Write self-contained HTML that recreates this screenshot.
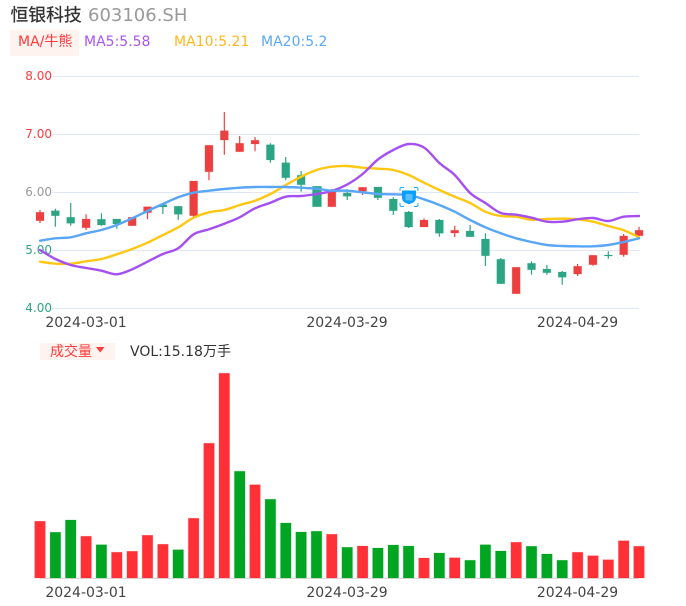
<!DOCTYPE html>
<html lang="zh">
<head>
<meta charset="utf-8">
<title>恒银科技</title>
<style>
html,body{margin:0;padding:0;background:#fff;width:686px;height:606px;overflow:hidden}
svg{display:block;position:absolute;left:0;top:0}
text{font-family:"DejaVu Sans","Noto Sans CJK SC",sans-serif}
</style>
</head>
<body>
<svg width="686" height="606" viewBox="0 0 686 606" xmlns="http://www.w3.org/2000/svg">
<rect width="686" height="606" fill="#fff"/>
<text x="10.5" y="21" font-size="17.800" fill="#333" stroke="#333" stroke-width="0.3">恒银科技</text>
<text x="88" y="21" font-size="18" fill="#999">603106.SH</text>
<rect x="10" y="30" width="69" height="26" fill="#fff3ef"/>
<text x="18" y="46" font-size="14" fill="#ff3b3b">MA/牛熊</text>
<text x="84" y="46" font-size="14" fill="#a855f7">MA5:5.58</text>
<text x="174" y="46" font-size="14" fill="#ffb71c">MA10:5.21</text>
<text x="261" y="46" font-size="14" fill="#5aa9fa">MA20:5.2</text>

<path d="M52 76.5H639M52 134.5H639M52 192.5H639M52 250.5H639M52 308.5H639" stroke="#e0e6f5" stroke-width="1" fill="none"/>
<g font-size="12" text-anchor="end">
<text x="52" y="80" fill="#ff3b3b">8.00</text>
<text x="52" y="138" fill="#ff3b3b">7.00</text>
<text x="52" y="196" fill="#999">6.00</text>
<text x="52" y="254" fill="#2ca584">5.00</text>
<text x="52" y="312" fill="#2ca584">4.00</text>
</g>

<path fill="none" stroke="#ec4040" stroke-width="1.2" d="M40 210V223M86.08 214.3V230M132.16 217.3V225.7M147.52 206.7V219.3M193.6 181V218.3M208.96 145.3V180.3M224.32 112V154.7M239.68 136V151.7M255.04 137V151.3M331.84 189V206.7M362.56 187.3V195M424 218.5V227M454.72 225.7V237M516.16 267.3V293.7M577.6 264V276M592.96 255.3V265.7M623.68 234V256.7M639.04 226.7V235.7"/>
<path fill="none" stroke="#2ca584" stroke-width="1.2" d="M55.36 208.7V226.7M70.72 203V225.7M101.44 213.3V225.7M116.8 219V228.7M162.88 203.3V214M178.24 206V220M270.4 143.3V162.7M285.76 157V180.3M301.12 171V191.7M316.48 186.3V206.7M347.2 189.3V200M377.92 187V200M393.28 197.3V215M408.64 211V228M439.36 219V236.7M470.08 225V236.7M485.44 233.3V266M500.8 258V283.7M531.52 261.3V274.7M546.88 265V274.7M562.24 271V284.7M608.32 251.3V258.7"/>
<path fill="#ec4040" stroke="#ec4040" stroke-opacity="0.25" stroke-width="0.8" d="M36 212.3h8v8.4h-8zM82.08 219h8v8.7h-8zM128.16 217.3h8v8.4h-8zM143.52 206.7h8v6h-8zM189.6 181h8v34.7h-8zM204.96 145.3h8v26.4h-8zM220.32 130.7h8v9.3h-8zM235.68 143.3h8v8.4h-8zM251.04 140.3h8v3.7h-8zM327.84 191h8v15.7h-8zM358.56 187.3h8v4h-8zM420 220h8v7h-8zM450.72 230.3h8v2.7h-8zM512.16 267.3h8v26.4h-8zM573.6 266.3h8v7.7h-8zM588.96 255.3h8v9.4h-8zM619.68 236h8v18.7h-8zM635.04 230.3h8v5.4h-8z"/>
<path fill="#2ca584" stroke="#2ca584" stroke-opacity="0.25" stroke-width="0.8" d="M51.36 210.7h8v5h-8zM66.72 217.3h8v6h-8zM97.44 219.3h8v5.7h-8zM112.8 219h8v5h-8zM158.88 204.7h8v2.3h-8zM174.24 206.3h8v8h-8zM266.4 144.7h8v15.3h-8zM281.76 162.7h8v15h-8zM297.12 175.3h8v9.4h-8zM312.48 186.3h9v20.4h-9zM343.2 193h8v3.3h-8zM373.92 187h8v10.7h-8zM389.28 199h8v11.7h-8zM404.64 212h8v15h-8zM435.36 220h8v13.3h-8zM466.08 231h8v5.7h-8zM481.44 239h8v16.7h-8zM496.8 259.3h8v24.4h-8zM527.52 263.3h8v6.4h-8zM542.88 269h8v3.7h-8zM558.24 272h8v5.3h-8zM604.32 255h8v1h-8z"/>

<polyline class="ma" fill="none" stroke="#ffc712" stroke-width="2.4" stroke-linejoin="round" stroke-linecap="round" points="40,261.7 55.4,263.7 70.7,263.7 86.1,261.3 101.4,259 116.8,254.3 132.2,249 147.5,242.7 162.9,235 178.2,227.3 193.6,217.7 209,212.3 224.3,210 239.7,205 255,200.7 270.4,194 285.8,185 301.1,176.7 316.5,170 331.8,166.7 347.2,166 362.6,167.7 377.9,168.7 393.3,170 408.6,175 424,182.7 439.4,190 454.7,196.7 470.1,203 485.4,211.7 500.8,216 516.2,216.7 531.5,219.7 546.9,219 562.2,218.7 577.6,219.3 593,221.7 608.3,226 623.7,230.3 639,237.3"/>
<polyline class="ma" fill="none" stroke="#a64ff0" stroke-width="2.4" stroke-linejoin="round" stroke-linecap="round" points="40,250 55.4,259 70.7,265 86.1,268 101.4,270.7 116.8,274.3 132.2,269.3 147.5,261.7 162.9,254 178.2,248.3 193.6,234.3 209,229.3 224.3,223.7 239.7,217.3 255,208.3 270.4,202.7 285.8,196.7 301.1,196 316.5,194 331.8,191 347.2,184.5 362.6,174 377.9,159.5 393.3,150 408.6,144 424,147.5 439.4,163 454.7,175 470.1,193 485.4,203 500.8,213 516.2,214.7 531.5,217.7 546.9,221.7 562.2,221.7 577.6,219.3 593,218 608.3,221 623.7,216.7 639,216"/>
<polyline class="ma" fill="none" stroke="#58a6f5" stroke-width="2.4" stroke-linejoin="round" stroke-linecap="round" points="40,240.7 55.4,238.3 70.7,237.3 86.1,233.3 101.4,230 116.8,225 132.2,218.3 147.5,211 162.9,204 178.2,197.3 193.6,192.7 209,190.7 224.3,189 239.7,187.7 255,187 270.4,187 285.8,187 301.1,187.7 316.5,188.7 331.8,190.7 347.2,190.7 362.6,192.3 377.9,194 393.3,194.3 408.6,195 424,199.3 439.4,205 454.7,211.7 470.1,220 485.4,227.3 500.8,233.3 516.2,238.3 531.5,242 546.9,245 562.2,246 577.6,246.3 593,246.3 608.3,245 623.7,242 639,238.3"/>

<path d="M402 190.500h14v6.500q0 3.800-2.700 5.500l-4.300 1.800l-4.300-1.800q-2.700-1.700-2.700-5.500z" fill="#08a0ff"/>
<rect x="405.500" y="194" width="7" height="6.500" fill="#5cbcff"/>
<path fill="none" stroke="#1ab0ff" stroke-width="1" d="M400 191v-2q0-1.500 1.500-1.500h2.500M414 187.500h2.500q1.500 0 1.500 1.500v2M400 203v2q0 1.500 1.500 1.500h2.500M418 203v2q0 1.500-1.500 1.500h-2.500"/>

<g font-size="14" fill="#444" text-anchor="middle">
<text x="86" y="327">2024-03-01</text>
<text x="347" y="327">2024-03-29</text>
<text x="577.500" y="327">2024-04-29</text>
</g>

<rect x="40" y="343" width="75" height="17" fill="#fff3ef"/>
<text x="50" y="356" font-size="14" fill="#ff3b3b">成交量</text>
<path d="M96 347h8.500l-4.250 5.500z" fill="#ff3b3b"/>
<text x="130" y="356" font-size="14" fill="#333">VOL:15.18万手</text>

<path d="M40 578.500H639" stroke="#ddd" stroke-width="1"/>
<path fill="#ff3036" stroke="#ff3036" stroke-opacity="0.25" stroke-width="0.8" d="M34.700 521.300h10.600V578h-10.600zM80.800 536.300h10.600V578h-10.600zM111.500 552.300h10.600V578h-10.600zM126.900 551.300h10.600V578h-10.600zM142.200 535.300h10.600V578h-10.600zM157.600 544.300h10.600V578h-10.600zM188.300 518.300h10.600V578h-10.600zM203.700 443.300h10.600V578h-10.600zM219 373.300h10.600V578h-10.600zM249.700 484.700h10.600V578h-10.600zM326.500 534.300h10.600V578h-10.600zM357.300 546h10.600V578h-10.600zM418.700 558h10.600V578h-10.600zM449.400 557.700h10.600V578h-10.600zM510.900 542.300h10.600V578h-10.600zM572.300 552.300h10.600V578h-10.600zM587.700 555.700h10.600V578h-10.600zM603 559.700h10.600V578h-10.600zM618.400 540.700h10.600V578h-10.600zM633.700 546.300h10.600V578h-10.600z"/>
<path fill="#00a522" stroke="#00a522" stroke-opacity="0.25" stroke-width="0.8" d="M50.100 532.300h10.600V578h-10.600zM65.400 520h10.600V578h-10.600zM96.100 544.700h10.600V578h-10.600zM172.900 549.700h10.600V578h-10.600zM234.400 471.300h10.600V578h-10.600zM265.100 499.300h10.600V578h-10.600zM280.500 523h10.600V578h-10.600zM295.800 532h10.600V578h-10.600zM311.200 531.300h10.600V578h-10.600zM341.900 547.300h10.600V578h-10.600zM372.600 548h10.600V578h-10.600zM388 545h10.600V578h-10.600zM403.300 546h10.600V578h-10.600zM434 553h10.600V578h-10.600zM464.800 560.300h10.600V578h-10.600zM480.100 544.700h10.600V578h-10.600zM495.500 551h10.600V578h-10.600zM526.200 546.300h10.600V578h-10.600zM541.600 554h10.600V578h-10.600zM556.900 560.300h10.600V578h-10.600z"/>

<g font-size="14" fill="#444" text-anchor="middle">
<text x="86" y="597">2024-03-01</text>
<text x="347" y="597">2024-03-29</text>
<text x="577.500" y="597">2024-04-29</text>
</g>
</svg>
<script>
document.querySelectorAll('polyline.ma').forEach(function(l){
  var p=l.getAttribute('points').trim().split(/\s+/).map(function(s){return s.split(',').map(Number)});
  var d='M'+p[0][0]+' '+p[0][1];
  for(var i=0;i<p.length-1;i++){
    var a=p[i-1]||p[i],b=p[i],c=p[i+1],e=p[i+2]||c;
    d+='C'+(b[0]+(c[0]-a[0])/6).toFixed(1)+' '+(b[1]+(c[1]-a[1])/6).toFixed(1)+' '+(c[0]-(e[0]-b[0])/6).toFixed(1)+' '+(c[1]-(e[1]-b[1])/6).toFixed(1)+' '+c[0]+' '+c[1];
  }
  var n=document.createElementNS('http://www.w3.org/2000/svg','path');
  n.setAttribute('d',d);
  ['fill','stroke','stroke-width','stroke-linejoin','stroke-linecap'].forEach(function(k){n.setAttribute(k,l.getAttribute(k))});
  l.parentNode.replaceChild(n,l);
});
</script>
</body>
</html>
